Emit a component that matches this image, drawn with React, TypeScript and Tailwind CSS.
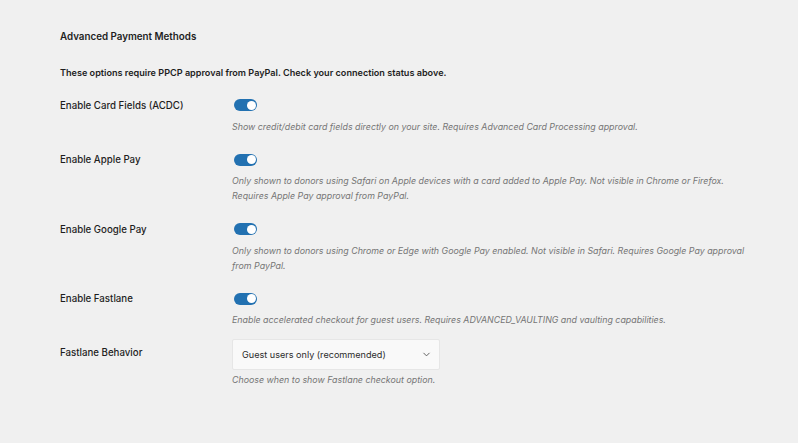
import React from 'react';
import { ChevronDown } from 'lucide-react';

type Row = {
  label: string;
  desc: string[];
};

const toggleRows: Row[] = [
  {
    label: 'Enable Card Fields (ACDC)',
    desc: ['Show credit/debit card fields directly on your site. Requires Advanced Card Processing approval.'],
  },
  {
    label: 'Enable Apple Pay',
    desc: [
      'Only shown to donors using Safari on Apple devices with a card added to Apple Pay. Not visible in Chrome or Firefox.',
      'Requires Apple Pay approval from PayPal.',
    ],
  },
  {
    label: 'Enable Google Pay',
    desc: [
      'Only shown to donors using Chrome or Edge with Google Pay enabled. Not visible in Safari. Requires Google Pay approval',
      'from PayPal.',
    ],
  },
  {
    label: 'Enable Fastlane',
    desc: ['Enable accelerated checkout for guest users. Requires ADVANCED_VAULTING and vaulting capabilities.'],
  },
];

const Toggle = () => (
  <div className="relative ml-[2px] w-[23px] h-[12px] rounded-full bg-[#2271b1]">
    <div className="absolute right-[1.5px] top-[1.5px] w-[9px] h-[9px] rounded-full bg-white" />
  </div>
);

const App = () => {
  return (
    <div
      className="min-h-screen w-full bg-[#f0f0f0] text-[#1e1e1e] pl-[60px] pt-[29px]"
      style={{ fontFamily: 'Inter, "Noto Sans", sans-serif' }}
    >
      {/* Section heading */}
      <h2 className="text-[9.8px] leading-[16px] font-semibold">Advanced Payment Methods</h2>
      <p className="mt-[20px] text-[9.1px] leading-[16px] font-semibold">
        These options require PPCP approval from PayPal. Check your connection status above.
      </p>

      {/* Toggle rows */}
      <div className="mt-[18px] flex flex-col gap-[20px]">
        {toggleRows.map((row) => (
          <div key={row.label} className="flex">
            <div className="w-[172px] shrink-0 text-[9.7px] leading-[12px] font-medium pt-[0.5px]">{row.label}</div>
            <div>
              <Toggle />
              <div className="mt-[7.5px] text-[8.85px] leading-[15px] italic text-[#757575]">
                {row.desc.map((line) => (
                  <div key={line}>{line}</div>
                ))}
              </div>
            </div>
          </div>
        ))}
      </div>

      {/* Fastlane behavior */}
      <div className="mt-[12px] flex">
        <div className="w-[172px] shrink-0 pt-[8px] text-[9.7px] leading-[12px] font-medium">Fastlane Behavior</div>
        <div>
          <div className="w-[208px] h-[31px] flex items-center justify-between pl-[9px] pr-[7px] bg-[#f9f9f9] border border-[#e6e6e6] rounded-[2px] text-[9.1px] text-[#2c2c2c]">
            <span>Guest users only (recommended)</span>
            <ChevronDown className="w-[11px] h-[11px] text-[#555]" strokeWidth={2} />
          </div>
          <div className="mt-[2px] text-[8.85px] leading-[15px] italic text-[#757575]">
            Choose when to show Fastlane checkout option.
          </div>
        </div>
      </div>
    </div>
  );
};

export default App;
